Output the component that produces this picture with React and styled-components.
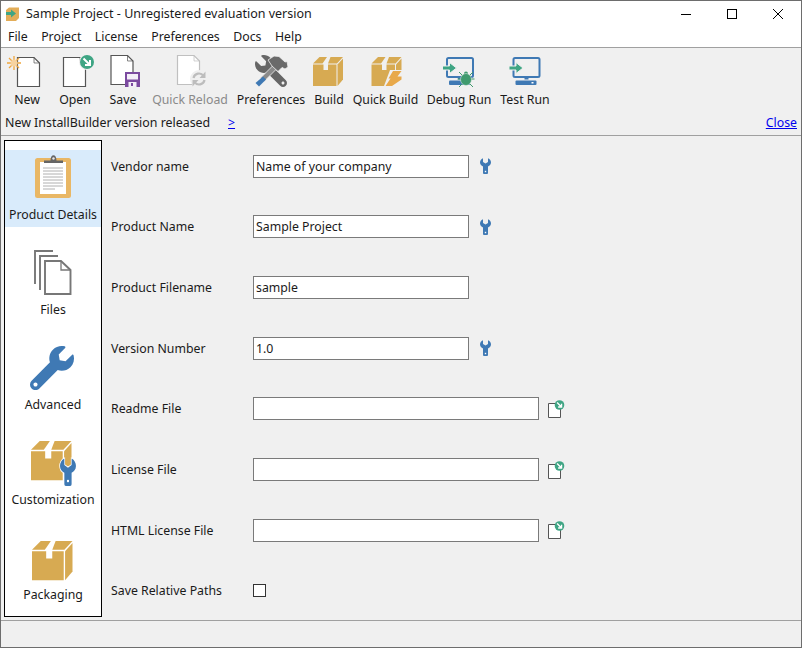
import React from "react";
import styled, { createGlobalStyle } from "styled-components";

const GlobalStyle = createGlobalStyle`
  html, body {
    margin: 0;
    padding: 0;
    background: #f0f0f0;
  }
  * {
    box-sizing: border-box;
  }
`;

const WRENCH =
  "M507.73 109.1c-2.24-9.03-13.54-12.09-20.12-5.51l-74.36 74.36-67.88-11.31-11.31-67.88 74.36-74.36c6.62-6.62 3.43-17.9-5.66-20.16-47.38-11.74-99.55.91-136.58 37.93-39.64 39.64-50.55 97.1-34.05 147.2L18.74 402.76c-24.99 24.99-24.99 65.51 0 90.5 24.99 24.99 65.51 24.99 90.5 0l213.21-213.21c50.12 16.71 107.47 5.68 147.37-34.22 37.07-37.07 49.7-89.32 37.91-136.73zM64 472c-13.25 0-24-10.75-24-24 0-13.26 10.75-24 24-24s24 10.74 24 24c0 13.25-10.75 24-24 24z";
const SMALL_WRENCH =
  "M3 .3C1 1 0 3 0 4.5 0 6.5 1.5 7.8 3 8.4V15a1 1 0 0 0 1 1h3a1 1 0 0 0 1-1V8.4c1.500-.6 3-1.900 3-3.900C11 3 10 1 8 .3V4L5.500 5.500 3 4Z";
const BLUE = "#3f79b4";
const GOLD = "#d7aa52";
const GREEN = "#3fa584";

const Window = styled.div`
  width: 802px;
  height: 648px;
  display: flex;
  flex-direction: column;
  border: 1px solid #6d6d6d;
  background: #f0f0f0;
  color: #1a1a1a;
  font-family: "Noto Sans", "Open Sans", sans-serif;
  font-size: 12.3px;
  overflow: hidden;
`;

const TitleBar = styled.div`
  height: 26px;
  display: flex;
  align-items: center;
  background: #fff;
`;

const TitleText = styled.div`
  flex: 1;
  margin-left: 6px;
  font-size: 12.5px;
  line-height: 26px;
`;

const TitleLogo = styled.svg`
  width: 15px;
  height: 15px;
  margin-left: 4px;
`;

const WindowButton = styled.div`
  width: 46px;
  height: 26px;
  display: flex;
  align-items: center;
  justify-content: center;
`;

const MenuBar = styled.div`
  height: 20px;
  display: flex;
  align-items: center;
  gap: 13.5px;
  padding-left: 7px;
  background: #fff;
`;

const MenuItem = styled.span`
  line-height: 20px;
`;

const Toolbar = styled.div`
  height: 89px;
  border-top: 1px solid #a0a0a0;
  border-bottom: 1px solid #a0a0a0;
  display: flex;
  flex-direction: column;
`;

const ToolRow = styled.div`
  display: flex;
  gap: 8px;
  padding: 7px 0 0 6px;
`;

const ToolButton = styled.div`
  width: ${({ $width }) => $width}px;
  display: flex;
  flex-direction: column;
  align-items: center;
  flex: none;
  white-space: nowrap;
  color: ${({ $disabled }) => ($disabled ? "#8a8a8a" : "inherit")};
`;

const ToolIcon = styled.svg`
  width: 40px;
  height: 34px;
  flex: none;
  overflow: visible;
`;

const ToolLabel = styled.span`
  margin-top: 2px;
  line-height: 18px;
`;

const NoticeBar = styled.div`
  display: flex;
  align-items: center;
  padding: 5px 4px 0 4px;
  line-height: 18px;
`;

const NoticeText = styled.span`
  width: 223px;
  font-size: 12.4px;
`;

const NoticeLink = styled.a`
  color: #0000ee;
  text-decoration: underline;
  margin-right: ${({ $push }) => ($push ? "auto" : "0")};
`;

const Main = styled.div`
  flex: 1;
  display: flex;
  min-height: 0;
`;

const Sidebar = styled.div`
  width: 98px;
  height: 477px;
  flex: none;
  margin: 4px 0 0 3px;
  padding-top: 9px;
  display: flex;
  flex-direction: column;
  gap: 18px;
  background: #fff;
  border: 1px solid #000;
`;

const SideItem = styled.div`
  height: 77px;
  flex: none;
  display: flex;
  flex-direction: column;
  align-items: center;
  padding-top: 3px;
  background: ${({ $active }) => ($active ? "#d9ebfb" : "transparent")};
`;

const SideIcon = styled.svg`
  width: 48px;
  height: 48px;
  flex: none;
  overflow: visible;
`;

const SideLabel = styled.span`
  margin-top: 5px;
  line-height: 18px;
  white-space: nowrap;
`;

const Form = styled.div`
  flex: 1;
  display: grid;
  grid-template-columns: 142px 1fr;
  grid-auto-rows: 60.65px;
  align-items: center;
  padding-left: 9px;
`;

const FieldLabel = styled.label`
  white-space: nowrap;
`;

const FieldControl = styled.div`
  display: flex;
  align-items: center;
`;

const TextInput = styled.input`
  width: ${({ $long }) => ($long ? "286px" : "216px")};
  height: 23px;
  padding: 0 2px;
  border: 1px solid #7a7a7a;
  background: #fff;
  color: #1a1a1a;
  font: inherit;
  outline: none;
`;

const HelpIcon = styled.svg`
  width: 11px;
  height: 16px;
  margin-left: 11px;
  flex: none;
`;

const BrowseIcon = styled.svg`
  width: 18px;
  height: 18px;
  margin-left: 9px;
  flex: none;
  overflow: visible;
`;

const CheckBox = styled.input`
  appearance: none;
  width: 13px;
  height: 13px;
  margin: 0;
  border: 1px solid #333;
  background: #fff;
`;

const StatusBar = styled.div`
  height: 27px;
  flex: none;
  border-top: 1px solid #a0a0a0;
`;

// little 30x29 carton used by the toolbar and the sidebar
function Carton({ x = 0, y = 0, scale = 1 }) {
  return (
    <g transform={`translate(${x} ${y}) scale(${scale})`} fill={GOLD}>
      <path d="M0 7.500H10.500V13H15V7.500H23.500V29H0Z" />
      <path d="M0 6.500 6.500 0H14L9.500 6.500Z" />
      <path d="M15 6.500 17.500 0H30L24 6.500Z" />
      <path d="M24.500 7.500 30 1.500V22.500L24.500 29Z" />
    </g>
  );
}

function Paper({ x, y, w = 23, h = 30, stroke = "#555", sw = 1.2 }) {
  const ear = w * 0.26;
  return (
    <g transform={`translate(${x} ${y})`}>
      <path
        d={`M.5 .5H${w - ear}L${w - 0.5} ${ear}V${h - 0.5}H.5Z`}
        fill="#fff"
        stroke={stroke}
        strokeWidth={sw}
      />
      <path d={`M${w - ear} .5V${ear}H${w - 0.5}`} fill="none" stroke={stroke} strokeWidth={sw * 0.6} />
    </g>
  );
}

function GreenBadge({ cx, cy, r }) {
  const s = r / 7;
  return (
    <g transform={`translate(${cx} ${cy}) scale(${s})`}>
      <circle r="7" fill={GREEN} />
      <path d="M-3.500 -3.500 2.500 2.500M3 -2V3H-2" fill="none" stroke="#fff" strokeWidth="2" />
    </g>
  );
}

function Monitor({ x }) {
  return (
    <g transform={`translate(${x} 0)`}>
      <rect x="1" y="3" width="26" height="19" rx="1.500" fill="none" stroke={BLUE} strokeWidth="2" />
      <rect x="12" y="22" width="4" height="2.500" fill={BLUE} />
      <rect x="3" y="25.500" width="21" height="4.500" rx="1" fill={BLUE} />
      <rect x="19" y="27" width="2" height="1.500" fill="#fff" />
    </g>
  );
}

function RunArrow({ x }) {
  return (
    <path
      d={`M${x} 11H${x + 7}V7.500L${x + 14} 13L${x + 7} 18.500V15H${x}Z`}
      fill={GREEN}
      stroke="#f0f0f0"
      strokeWidth="1"
    />
  );
}

const NewIcon = () => (
  <ToolIcon viewBox="0 0 40 34">
    <Paper x={10} y={2} />
    <g stroke="#f0a63c" strokeWidth="1.300">
      <path d="M7 1V15M0 8H14M2 3 12 13M12 3 2 13" />
    </g>
    <circle cx="7" cy="8" r="3.500" fill="#f6d3a0" />
  </ToolIcon>
);

const OpenIcon = () => (
  <ToolIcon viewBox="0 0 40 34">
    <Paper x={8} y={2} />
    <circle cx="32" cy="7" r="8" fill="#f0f0f0" />
    <GreenBadge cx={32} cy={7} r={7} />
  </ToolIcon>
);

const SaveIcon = () => (
  <ToolIcon viewBox="0 0 40 34">
    <Paper x={7.500} y={0} />
    <rect x="22" y="17" width="15" height="15" fill="#7b4a9f" />
    <rect x="24" y="19" width="11" height="5.500" fill="#f4eef8" />
    <rect x="25.500" y="27" width="8" height="5" fill="#f4eef8" />
    <rect x="28" y="28" width="2" height="3" fill="#7b4a9f" />
  </ToolIcon>
);

const ReloadIcon = () => (
  <ToolIcon viewBox="0 0 40 34">
    <Paper x={7} y={0} stroke="#c0c0c0" />
    <circle cx="29" cy="24" r="9" fill="#f0f0f0" />
    <g fill="none" stroke="#bdbdbd" strokeWidth="2.200">
      <path d="M23.500 23A5.500 5.500 0 0 1 33.500 21" />
      <path d="M34.500 25A5.500 5.500 0 0 1 24.500 27" />
    </g>
    <path d="M35.500 16.500V23H29.500ZM22.500 31.500V25H28.500Z" fill="#bdbdbd" />
  </ToolIcon>
);

const PreferencesIcon = () => (
  <ToolIcon viewBox="0 0 40 34">
    <g transform="translate(36 0) scale(-0.0625 0.0625)">
      <path d={WRENCH} fill="#666" fillRule="evenodd" />
    </g>
    <path d="M23 9.500 26.500 13 13 26.500 9.500 23Z" fill="#8a8a8a" stroke="#f0f0f0" strokeWidth="0.800" />
    <path d="M12 21.500 15 24.500 8 31.500 4.500 28Z" fill={BLUE} />
    <path d="M17 5 23 1 28 1.500 34 7 36 6.500 37 12 34 14 31 12.500 27 16.500 21 11Z" fill="#6a6a6a" stroke="#f0f0f0" strokeWidth="0.800" />
  </ToolIcon>
);

const BuildIcon = () => (
  <ToolIcon viewBox="0 0 40 34">
    <Carton x={4} y={2} />
  </ToolIcon>
);

const QuickBuildIcon = () => (
  <ToolIcon viewBox="0 0 40 34">
    <Carton x={5.500} y={2} />
    <path d="M24 15H36V31H18Z" fill="#f0f0f0" />
    <path d="M27 16H35.500L31.500 21.500H35.500V24.500L26 31H19.500L24.500 23.500H22.500Z" fill="#e8a94a" />
  </ToolIcon>
);

const DebugRunIcon = () => (
  <ToolIcon viewBox="0 0 40 34">
    <Monitor x={7} />
    <RunArrow x={3.500} />
    <g stroke="#3f9a6e" strokeWidth="1" fill="none">
      <path d="M20 17 24 21M34 17 30 21M18.500 24H23M35.500 24H31M20 32 24 28M34 32 30 28" />
    </g>
    <circle cx="27" cy="18.500" r="2" fill="#3f9a6e" />
    <ellipse cx="27" cy="24.500" rx="5.500" ry="6" fill="#3f9a6e" stroke="#f0f0f0" strokeWidth="0.500" />
  </ToolIcon>
);

const TestRunIcon = () => (
  <ToolIcon viewBox="0 0 40 34">
    <Monitor x={7.500} />
    <RunArrow x={4} />
  </ToolIcon>
);

const ClipboardIcon = () => (
  <SideIcon viewBox="0 0 48 48">
    <rect x="6" y="5" width="36" height="40" rx="2.500" fill="#e9b765" />
    <rect x="11" y="9" width="26" height="32" fill="#fff" />
    <path
      d="M14 15H34M14 18H34M14 21H34M14 24H34M14 27H34M14 30H34M14 33H34M14 36H26"
      stroke="#b0b0b0"
      strokeWidth="1"
    />
    <path d="M15 10V7.500H21.500C21.500 .5 27.500 .5 27.500 7.500H34V10Z" fill="#666" />
    <circle cx="24.500" cy="5.500" r="1.200" fill="#e9e9e9" />
  </SideIcon>
);

const FilesIcon = () => (
  <SideIcon viewBox="0 0 48 48">
    <path d="M6 36V3H24" fill="none" stroke="#777" strokeWidth="1.900" />
    <path d="M11 42V8H29" fill="none" stroke="#777" strokeWidth="1.900" />
    <path d="M16 13H32L41.500 22V46H16Z" fill="#fff" stroke="#777" strokeWidth="1.900" />
    <path d="M32 13V22H41.500" fill="none" stroke="#777" strokeWidth="1.300" />
  </SideIcon>
);

const AdvancedIcon = () => (
  <SideIcon viewBox="0 0 48 48">
    <g transform="translate(1 3) scale(0.086)">
      <path d={WRENCH} fill={BLUE} fillRule="evenodd" />
    </g>
  </SideIcon>
);

const CustomizationIcon = () => (
  <SideIcon viewBox="0 0 48 48">
    <Carton x={2} y={3} scale={1.350} />
    <g transform="translate(31 20) scale(1.450 1.750)">
      <path d={SMALL_WRENCH} fill={BLUE} stroke="#fff" strokeWidth="1" paintOrder="stroke" />
      <rect x="4.800" y="12.500" width="1.400" height="1.300" fill="#fff" />
    </g>
  </SideIcon>
);

const PackagingIcon = () => (
  <SideIcon viewBox="0 0 48 48">
    <Carton x={3} y={8} scale={1.350} />
  </SideIcon>
);

const FieldWrench = () => (
  <HelpIcon viewBox="0 0 11 16">
    <path d={SMALL_WRENCH} fill={BLUE} />
    <rect x="4.800" y="12.800" width="1.400" height="1.400" fill="#fff" />
  </HelpIcon>
);

const FieldBrowse = () => (
  <BrowseIcon viewBox="0 0 18 18">
    <path d="M.5 3.500H12.500V17.500H.5Z" fill="#fff" stroke="#555" />
    <GreenBadge cx={11.500} cy={5} r={4.800} />
  </BrowseIcon>
);

const tools = [
  { label: "New", width: 40, Icon: NewIcon },
  { label: "Open", width: 40, Icon: OpenIcon },
  { label: "Save", width: 40, Icon: SaveIcon },
  { label: "Quick Reload", width: 78, Icon: ReloadIcon, disabled: true },
  { label: "Preferences", width: 68, Icon: PreferencesIcon },
  { label: "Build", width: 32, Icon: BuildIcon },
  { label: "Quick Build", width: 65, Icon: QuickBuildIcon },
  { label: "Debug Run", width: 66, Icon: DebugRunIcon },
  { label: "Test Run", width: 50, Icon: TestRunIcon },
];

const sections = [
  { label: "Product Details", Icon: ClipboardIcon, active: true },
  { label: "Files", Icon: FilesIcon },
  { label: "Advanced", Icon: AdvancedIcon },
  { label: "Customization", Icon: CustomizationIcon },
  { label: "Packaging", Icon: PackagingIcon },
];

const fields = [
  { label: "Vendor name", value: "Name of your company", wrench: true },
  { label: "Product Name", value: "Sample Project", wrench: true },
  { label: "Product Filename", value: "sample" },
  { label: "Version Number", value: "1.0", wrench: true },
  { label: "Readme File", value: "", file: true },
  { label: "License File", value: "", file: true },
  { label: "HTML License File", value: "", file: true },
];

const menus = ["File", "Project", "License", "Preferences", "Docs", "Help"];

export default function App() {
  return (
    <>
      <GlobalStyle />
      <Window>
        <TitleBar>
          <TitleLogo viewBox="0 0 15 15">
            <path d="M1 3 4 .5H14V11L11 14H1Z" fill="#e3ad58" />
            <path d="M1 5H6V2.500L11 6.500 6 10.500V8H1Z" fill={GREEN} />
          </TitleLogo>
          <TitleText>Sample Project - Unregistered evaluation version</TitleText>
          <WindowButton>
            <svg width="10" height="10" viewBox="0 0 10 10">
              <path d="M0 5.500H10" stroke="#000" />
            </svg>
          </WindowButton>
          <WindowButton>
            <svg width="10" height="10" viewBox="0 0 10 10">
              <rect x=".5" y=".5" width="9" height="9" fill="none" stroke="#000" />
            </svg>
          </WindowButton>
          <WindowButton>
            <svg width="10" height="10" viewBox="0 0 10 10">
              <path d="M0 0 10 10M10 0 0 10" stroke="#000" />
            </svg>
          </WindowButton>
        </TitleBar>
        <MenuBar>
          {menus.map((menu) => (
            <MenuItem key={menu}>{menu}</MenuItem>
          ))}
        </MenuBar>
        <Toolbar>
          <ToolRow>
            {tools.map(({ label, width, Icon, disabled }) => (
              <ToolButton key={label} $width={width} $disabled={disabled}>
                <Icon />
                <ToolLabel>{label}</ToolLabel>
              </ToolButton>
            ))}
          </ToolRow>
          <NoticeBar>
            <NoticeText>New InstallBuilder version released</NoticeText>
            <NoticeLink $push>&gt;</NoticeLink>
            <NoticeLink>Close</NoticeLink>
          </NoticeBar>
        </Toolbar>
        <Main>
          <Sidebar>
            {sections.map(({ label, Icon, active }) => (
              <SideItem key={label} $active={active}>
                <Icon />
                <SideLabel>{label}</SideLabel>
              </SideItem>
            ))}
          </Sidebar>
          <Form>
            {fields.map(({ label, value, wrench, file }) => (
              <React.Fragment key={label}>
                <FieldLabel>{label}</FieldLabel>
                <FieldControl>
                  <TextInput defaultValue={value} $long={file} />
                  {wrench && <FieldWrench />}
                  {file && <FieldBrowse />}
                </FieldControl>
              </React.Fragment>
            ))}
            <FieldLabel>Save Relative Paths</FieldLabel>
            <FieldControl>
              <CheckBox type="checkbox" />
            </FieldControl>
          </Form>
        </Main>
        <StatusBar />
      </Window>
    </>
  );
}
